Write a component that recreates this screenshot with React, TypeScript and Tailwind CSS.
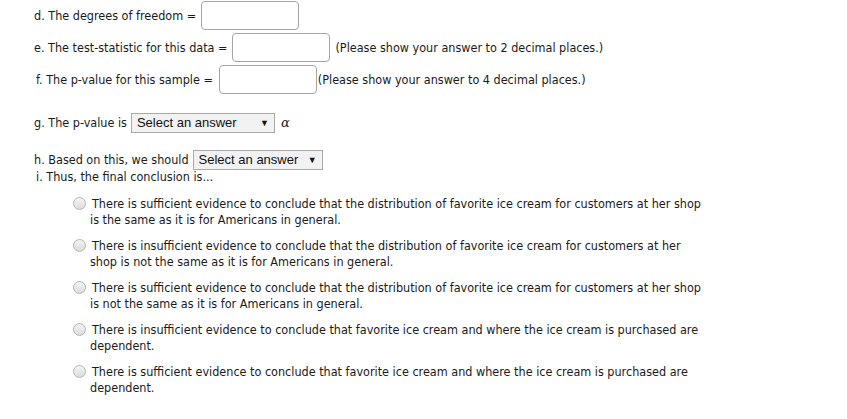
const options = [
  [
    "There is sufficient evidence to conclude that the distribution of favorite ice cream for customers at her shop",
    "is the same as it is for Americans in general.",
  ],
  [
    "There is insufficient evidence to conclude that the distribution of favorite ice cream for customers at her",
    "shop is not the same as it is for Americans in general.",
  ],
  [
    "There is sufficient evidence to conclude that the distribution of favorite ice cream for customers at her shop",
    "is not the same as it is for Americans in general.",
  ],
  [
    "There is insufficient evidence to conclude that favorite ice cream and where the ice cream is purchased are",
    "dependent.",
  ],
  [
    "There is sufficient evidence to conclude that favorite ice cream and where the ice cream is purchased are",
    "dependent.",
  ],
];

function TextBox() {
  return <div className="h-[29px] w-[98px] rounded-[4px] border border-[#a6a6a6] bg-white" />;
}

function SelectBox({ width }: { width: string }) {
  return (
    <div
      className={
        "flex h-[20px] items-center justify-between border border-[#a9a9a9] bg-[#f2f2f2] pl-[5px] pr-[5px] font-['Liberation_Sans'] text-[13px] text-[#111] " +
        width
      }
    >
      <span>Select an answer</span>
      <span className="text-[9px] leading-none">▼</span>
    </div>
  );
}

function Radio() {
  return (
    <div className="mt-[1px] h-[13px] w-[13px] shrink-0 rounded-full border border-[#b5b5b5] bg-gradient-to-b from-[#f4f4f4] to-[#dcdcdc]" />
  );
}

export default function App() {
  return (
    <div className="min-h-[419px] bg-white pl-[34px] pt-[1px] font-['DejaVu_Sans_Condensed'] text-[12.5px] leading-[16px] text-[#1a1a1a]">
      <div className="flex items-center gap-[5px]">
        <span>d. The degrees of freedom =</span>
        <TextBox />
      </div>
      <div className="mt-[3px] flex items-center gap-[5px]">
        <span>e. The test-statistic for this data =</span>
        <TextBox />
        <span>(Please show your answer to 2 decimal places.)</span>
      </div>
      <div className="mt-[3px] flex items-center">
        <span className="pl-[2px]">f. The p-value for this sample =</span>
        <span className="ml-[6px]">
          <TextBox />
        </span>
        <span className="ml-[1px]">(Please show your answer to 4 decimal places.)</span>
      </div>

      <div className="mt-[19px] flex items-center gap-[4px]">
        <span>g. The p-value is</span>
        <SelectBox width="w-[144px]" />
        <span className="ml-[2px] font-['DejaVu_Serif'] text-[13px] italic">α</span>
      </div>

      <div className="mt-[17px] flex items-center gap-[4px]">
        <span>h. Based on this, we should</span>
        <SelectBox width="w-[130px]" />
      </div>
      <div className="-mt-[1px] pl-[2px]">i. Thus, the final conclusion is...</div>

      <div className="mt-[11px] flex flex-col gap-[10px] pl-[39px]">
        {options.map((o, i) => (
          <div key={i} className="flex gap-[4px]">
            <Radio />
            <div className="whitespace-nowrap">
              <div className="pl-[2px]">{o[0]}</div>
              <div>{o[1]}</div>
            </div>
          </div>
        ))}
      </div>
    </div>
  );
}
